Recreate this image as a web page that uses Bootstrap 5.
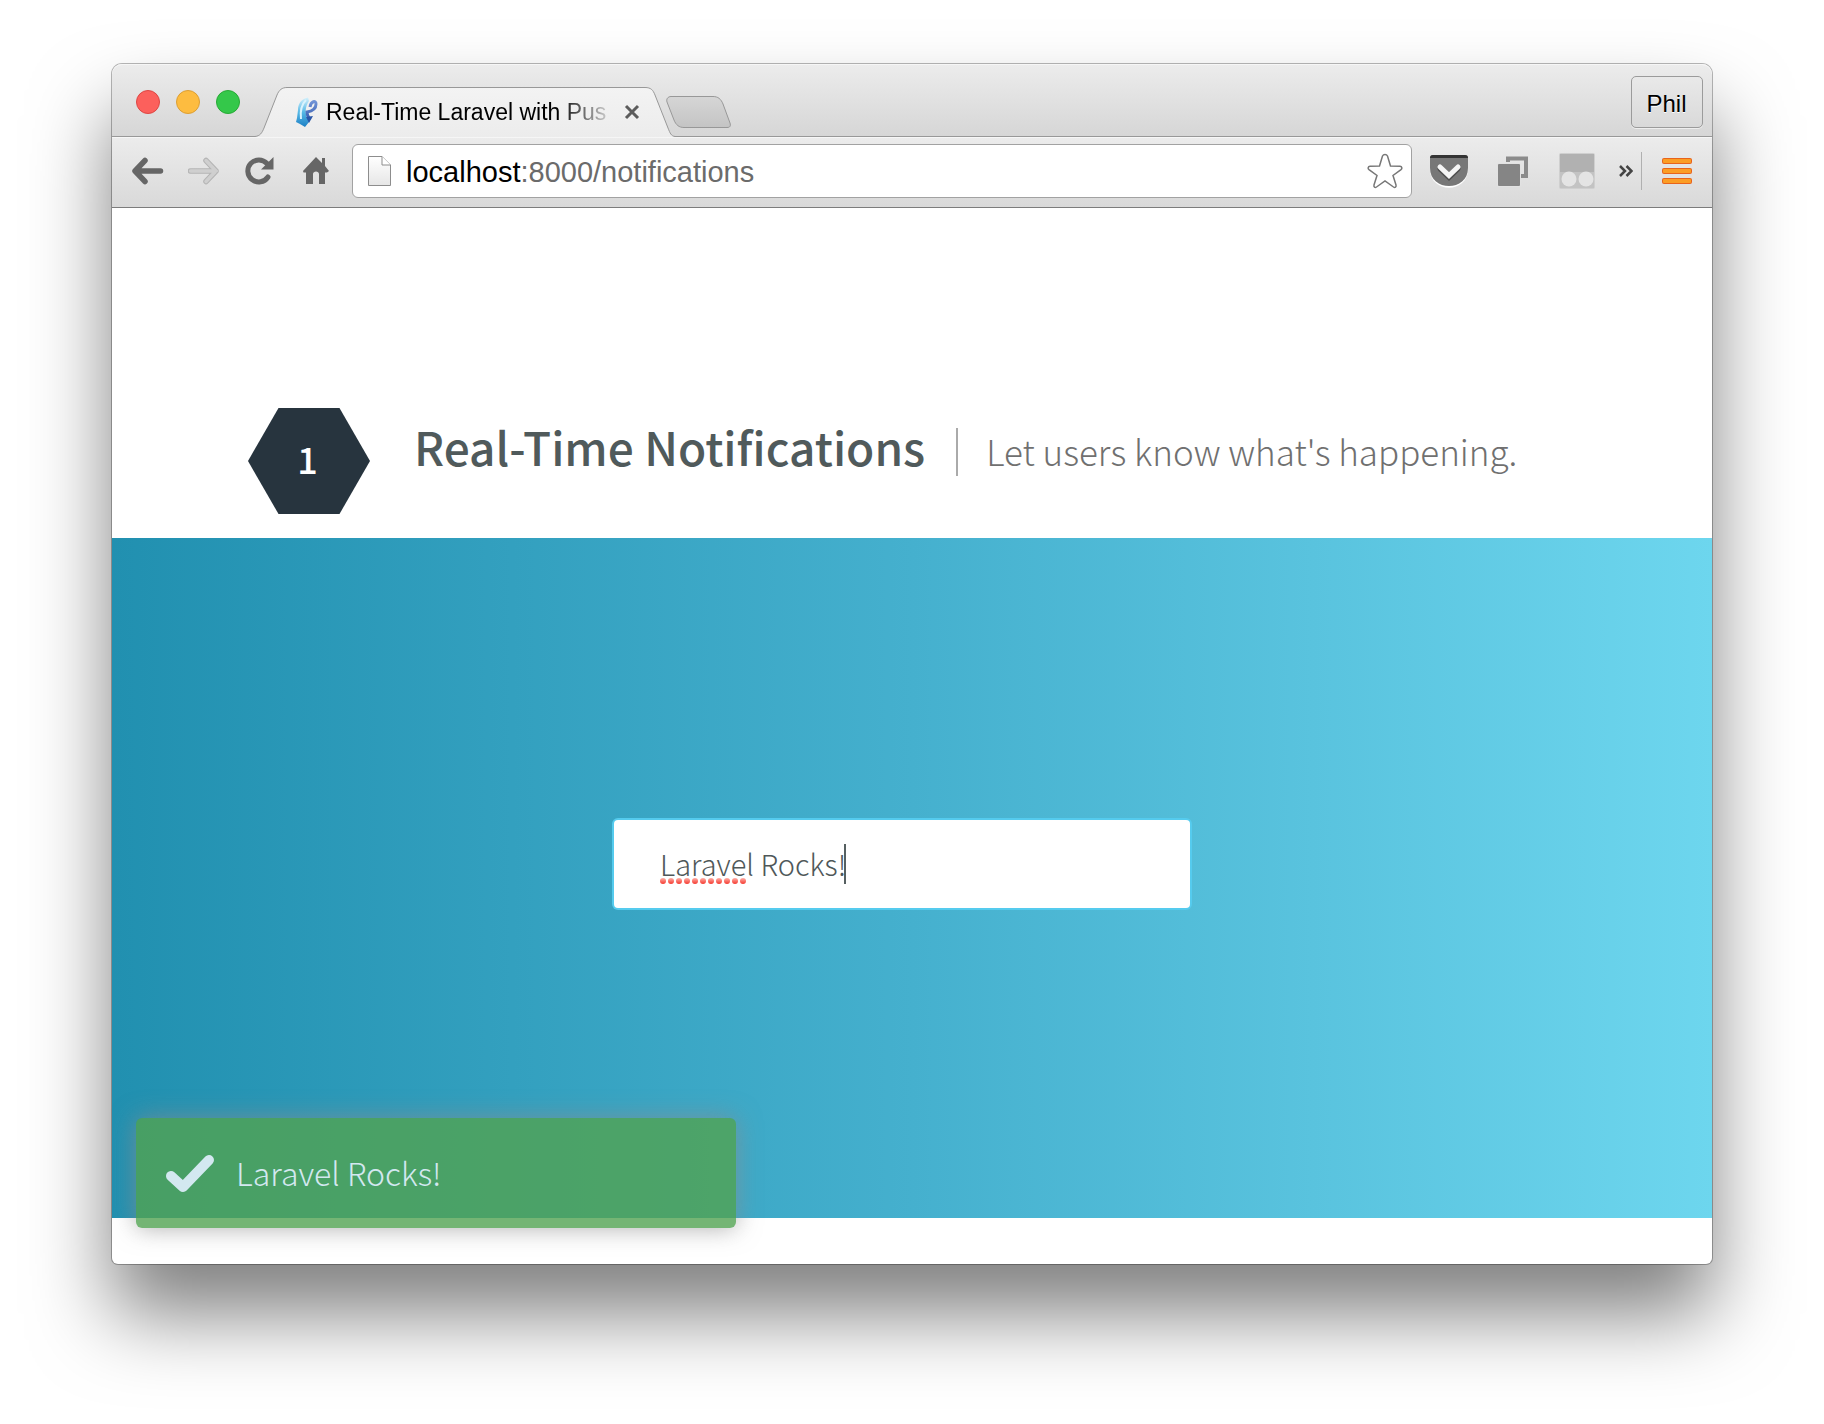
<!DOCTYPE html>
<html lang="en">
<head>
<meta charset="utf-8">
<meta name="viewport" content="width=device-width, initial-scale=1">
<title>Real-Time Laravel with Pusher</title>
<link href="https://cdn.jsdelivr.net/npm/bootstrap@5.3.0/dist/css/bootstrap.min.css" rel="stylesheet">
<style>
  body { background: #fff; }
  .desktop { min-height: 100vh; padding: 64px 112px 160px; }
  .browser {
    border-radius: 10px 10px 6px 6px;
    background: #fff;
    box-shadow: 0 0 0 1px rgba(0,0,0,.28), 0 50px 80px rgba(0,0,0,.5);
    font-family: "Liberation Sans", Arial, sans-serif;
  }
  .bare { border: 0; padding: 0; background: none; line-height: 0; flex: none; }
  .tabstrip {
    height: 73px;
    padding: 12px 9px 0 24px;
    border-radius: 10px 10px 0 0;
    border-bottom: 1px solid #989898;
    background: linear-gradient(#ececec, #d6d6d6);
    box-shadow: inset 0 1px 0 #f6f6f6;
  }
  .light { width: 24px; height: 24px; border-radius: 50%; margin-top: 14px; }
  .light-close { background: #fc605c; border: 1px solid #de4643; }
  .light-min { background: #fdbc40; border: 1px solid #dd9f33; }
  .light-max { background: #34c84a; border: 1px solid #27aa35; }
  .tab-item { width: 420px; height: 50px; margin: 11px 0 0 15px; padding: 0 0 0 41px; }
  .tab-shape { left: 0; top: 0; }
  .tab-title {
    width: 290px; font-size: 23px; line-height: 48px; color: #000;
    -webkit-mask-image: linear-gradient(90deg, #000 80%, transparent);
    mask-image: linear-gradient(90deg, #000 80%, transparent);
  }
  .new-tab { margin: 20px 0 0 -9px; }
  .user-btn {
    width: 72px; height: 52px; border: 1px solid #9b9b9b; border-radius: 5px;
    background: linear-gradient(#e9e9e9, #d9d9d9); color: #000; font-size: 24px; padding: 3px 1px 0 0;
    text-shadow: 0 1px 0 #fff; box-shadow: 0 1px 0 #eee;
  }
  .toolbar {
    height: 71px; padding: 0 20px 2px; border-bottom: 1px solid #7c7c7c;
    background: linear-gradient(#ececec, #d9d9d9);
    box-shadow: inset 0 1px 0 #f6f6f6;
  }
  .nav-buttons { gap: 24px; margin-right: 20px; }
  .extensions { gap: 27px; margin: 0 23px 0 16px; }
  .omnibox {
    height: 54px; padding: 0 8px 0 15px; border: 1px solid #a2a2a2; border-radius: 6px; background: #fff;
  }
  .address { font-size: 29px; line-height: 50px; color: #6b6b6b; text-decoration: none; margin-left: 15px; padding-top: 2px; }
  .address b { font-weight: 400; color: #000; }
  .separator { width: 1px; height: 38px; background: #b0b0b0; margin: 0 20px 0 8px; }
  .page-view, .toast-box { font-family: "Noto Sans CJK SC", sans-serif; }
  .page-view { min-height: 1056px; }
  .step-head { padding: 200px 136px 24px; }
  .hexagon {
    width: 122px; height: 106px; margin-right: 44px; flex: none; padding-right: 3px;
    background: #27343e; color: #fff; font-size: 36px; font-weight: 500; line-height: 100px;
    clip-path: polygon(25% 0, 75% 0, 100% 50%, 75% 100%, 25% 100%, 0 50%);
  }
  .headline { margin-top: 13px; }
  .headline h1 { font-size: 46px; line-height: 50px; font-weight: 500; color: #505a5b; }
  .divider { width: 2px; height: 48px; background: #aaa; margin: 7px 28px 0 31px; }
  .tagline { font-size: 35px; line-height: 40px; font-weight: 200; color: #707070; }
  .stage {
    height: 680px; padding: 282px 20px 0 0;
    background: linear-gradient(90deg, #2190b0, #45b0ce 50%, #6dd6ee);
  }
  .notify-form { width: 576px; }
  .notify-input {
    height: 88px; padding: 0 46px 2px; border: 0; border-radius: 4px;
    font-family: inherit; font-size: 29px; font-weight: 200; color: #4f5859;
  }
  .notify-input, .notify-input:focus { box-shadow: 0 0 0 2px #55cbee; color: #4f5859; }
  .spelling { left: 46px; top: 58px; }
  .caret { left: 230px; top: 24px; width: 2px; height: 40px; background: #566061; }
  .toast-box {
    left: 24px; bottom: 36px; width: 600px; height: 110px; padding-left: 30px;
    border-radius: 6px; background: rgba(81,163,81,.8); color: #d3e8f0;
    box-shadow: 0 0 24px rgba(140,140,140,.7);
  }
  .toast-note { font-size: 32px; line-height: 48px; font-weight: 200; margin: 0 0 2px 22px; }
</style>
</head>
<body>
<main class="desktop d-flex flex-column">
  <div class="browser flex-grow-1 d-flex flex-column position-relative">

    <header class="tabstrip d-flex align-items-start">
      <div class="d-flex gap-3">
        <button class="bare light light-close" aria-label="Close window"></button>
        <button class="bare light light-min" aria-label="Minimize window"></button>
        <button class="bare light light-max" aria-label="Zoom window"></button>
      </div>
      <div class="tab-item position-relative d-flex align-items-center flex-shrink-0">
        <svg class="tab-shape position-absolute" width="420" height="50" viewBox="0 0 420 50" aria-hidden="true">
          <defs><linearGradient id="tabFill" x2="0" y2="1"><stop stop-color="#f3f3f3"/><stop offset="1" stop-color="#ececec"/></linearGradient></defs>
          <path d="M0 50V49.500C5 49 7 46 9 41L22 8C24 3 27 .5 32 .5H390C396 .5 398 3 400 8L413 41C415 46 416 49 420 49.500V50Z" fill="url(#tabFill)"/>
          <path d="M0 49.500C5 49 7 46 9 41L22 8C24 3 27 .5 32 .5H390C396 .5 398 3 400 8L413 41C415 46 416 49 420 49.500" fill="none" stroke="#989898"/>
        </svg>
        <svg class="position-relative flex-shrink-0" width="22" height="30" viewBox="0 0 22 30" aria-hidden="true">
          <defs>
            <linearGradient id="favA" x2="0" y2="1"><stop stop-color="#d4f1fc"/><stop offset=".5" stop-color="#55b8e6"/><stop offset="1" stop-color="#1d7fc4"/></linearGradient>
            <linearGradient id="favB" x2="0" y2="1"><stop stop-color="#6f92d6"/><stop offset="1" stop-color="#3a5fb0"/></linearGradient>
          </defs>
          <path d="M12 .5C5 2 2 7 2 13L1 21L0 25L4 27L9 30L13 25L16 20L11 21C9 16 9 10 13 4Z" fill="url(#favA)"/>
          <path d="M5 22C4 14 5 8 10 3" stroke="#d9f3fd" stroke-width="2" fill="none"/>
          <path d="M14 10C15 4 20 3 20 7C20 11 17 14 11 15C11 18 12 20 14 22" stroke="url(#favB)" stroke-width="3" fill="none"/>
          <path d="M10 20L17 19L13 26Z" fill="#2a56a8"/>
        </svg>
        <span class="tab-title position-relative text-nowrap overflow-hidden ms-2">Real-Time Laravel with Pus</span>
        <button class="bare position-relative ms-2" aria-label="Close tab">
          <svg width="16" height="16" viewBox="0 0 16 16"><path d="M2 2L14 14M14 2L2 14" stroke="#5c5c5c" stroke-width="3"/></svg>
        </button>
      </div>
      <button class="bare new-tab position-relative" aria-label="New tab">
        <svg width="66" height="34" viewBox="0 0 66 34">
          <defs><linearGradient id="ntFill" x2="0" y2="1"><stop stop-color="#d6d6d6"/><stop offset="1" stop-color="#c4c4c4"/></linearGradient></defs>
          <path d="M5 .5H47C52 .5 55 3 57 8L64 27C65 30 64 31.500 61 31.500H18C13 31.500 10 29 8 24L1 6C0 3 2 .5 5 .5Z" fill="url(#ntFill)" stroke="#989898"/>
        </svg>
      </button>
      <button class="user-btn ms-auto">Phil</button>
    </header>

    <nav class="toolbar d-flex align-items-center" aria-label="Browser">
      <div class="nav-buttons d-flex align-items-center">
        <button class="bare" aria-label="Back"><svg width="32" height="28" viewBox="0 0 32 28"><path d="M28.500 14H4M13 3.500L3 14L13 24.500" fill="none" stroke="#666" stroke-width="5.500" stroke-linecap="round" stroke-linejoin="round"/></svg></button>
        <button class="bare" aria-label="Forward"><svg width="32" height="28" viewBox="0 0 32 28"><path d="M2.500 14H28M18 3.500L28 14L18 24.500" fill="none" stroke="#b4b4b4" stroke-width="5.500" stroke-linecap="round" stroke-linejoin="round"/><path d="M2.500 14H28M18 3.500L28 14L18 24.500" fill="none" stroke="#cfcfcf" stroke-width="3.500" stroke-linecap="round"/></svg></button>
        <button class="bare" aria-label="Reload"><svg width="32" height="28" viewBox="0 0 32 28"><path d="M24 20A11 11 0 1 1 23 6.500" fill="none" stroke="#666" stroke-width="5" stroke-linecap="round"/><path d="M29.500 0V12.500H17Z" fill="#666"/></svg></button>
        <button class="bare" aria-label="Home"><svg width="32" height="28" viewBox="0 0 32 28"><path d="M16 0L22 6V1H25V9L29 14L27 15.500H25V27H19V17C19 13.500 13 13.500 13 17V27H6V15.500H3.500L3 14Z" fill="#666"/></svg></button>
      </div>
      <div class="omnibox flex-grow-1 d-flex align-items-center">
        <svg class="flex-shrink-0" width="23" height="30" viewBox="0 0 23 30" aria-hidden="true">
          <defs><linearGradient id="pageFill" x2="0" y2="1"><stop stop-color="#fff"/><stop offset="1" stop-color="#e6e6e6"/></linearGradient></defs>
          <path d="M.5 .5H14L22.500 9V29.500H.5Z" fill="url(#pageFill)" stroke="#8d8d8d"/><path d="M14 .5V9H22.500" fill="#fff" stroke="#8d8d8d"/>
        </svg>
        <a class="address flex-grow-1" href="#"><b>localhost</b>:8000/notifications</a>
        <button class="bare" aria-label="Bookmark this page"><svg width="36" height="36" viewBox="0 0 36 36"><path d="M18 1.500C19 1.500 20 2 20.500 3L23.500 13L33 13.300C35 13.500 35.500 15.500 34 16.700L26 22.500L29 32C29.500 34 28 35 26.500 34L18 28L9.500 34C8 35 6.500 34 7 32L10 22.500L2 16.700C.5 15.500 1 13.500 3 13.300L12.500 13L15.500 3C16 2 17 1.500 18 1.500Z" fill="#fff" stroke="#777" stroke-width="1.500"/></svg></button>
      </div>
      <div class="extensions d-flex align-items-center">
        <button class="bare" aria-label="Pocket"><svg width="42" height="36" viewBox="0 0 42 36"><path d="M2 5C2 3 3 2 5 2H37C39 2 40 3 40 5V16C40 41 2 41 2 16Z" fill="#fff"/><path d="M2 5C2 3 3 2 5 2H37C39 2 40 3 40 5V15C40 39 2 39 2 15Z" fill="#777"/><path d="M2 5C2 3 3 2 5 2H37C39 2 40 3 40 5H2Z" fill="#333"/><path d="M12 16L21 24.500L30 16" fill="none" stroke="#4d4d4d" stroke-width="5" stroke-linecap="round"/><path d="M12 14L21 22.500L30 14" fill="none" stroke="#f4f4f4" stroke-width="5" stroke-linecap="round"/></svg></button>
        <button class="bare" aria-label="Windows"><svg width="34" height="32" viewBox="0 0 34 32"><path d="M11 7V3.500H29V21H24" fill="none" stroke="#8b8b8b" stroke-width="4"/><rect y="8" width="24" height="24" rx="2" fill="#e2e2e2"/><rect x="1" y="9" width="22" height="22" rx="1" fill="#858585"/></svg></button>
        <button class="bare" aria-label="Extension"><svg width="38" height="38" viewBox="0 0 38 38"><rect x="1" y="1" width="36" height="36" rx="2" fill="#cfcfcf"/><rect x="2" y="2" width="34" height="20" fill="#b1b1b1"/><rect x="2" y="20" width="34" height="16" fill="#c3c3c3"/><circle cx="11" cy="27" r="7.500" fill="#e4e4e4"/><circle cx="28" cy="27" r="7.500" fill="#e4e4e4"/></svg></button>
      </div>
      <button class="bare" aria-label="More extensions"><svg width="14" height="12" viewBox="0 0 14 12"><path d="M1 1L6 6L1 11M7.500 1L12.500 6L7.500 11" fill="none" stroke="#444" stroke-width="2.500"/></svg></button>
      <span class="separator"></span>
      <button class="bare" aria-label="Menu"><svg width="30" height="28" viewBox="0 0 30 28"><g fill="#e8641c"><rect y="1" width="30" height="6" rx="2"/><rect y="11" width="30" height="6" rx="2"/><rect y="21" width="30" height="6" rx="2"/></g><g fill="#fb9d24"><rect x="1" y="2" width="28" height="4" rx="1"/><rect x="1" y="12" width="28" height="4" rx="1"/><rect x="1" y="22" width="28" height="4" rx="1"/></g></svg></button>
    </nav>

    <div class="page-view flex-grow-1">
      <section class="step-head d-flex align-items-start">
        <div class="hexagon text-center">1</div>
        <div class="headline d-flex align-items-baseline text-nowrap">
          <h1 class="m-0">Real-Time Notifications</h1>
          <span class="divider align-self-start"></span>
          <p class="tagline m-0">Let users know what's happening.</p>
        </div>
      </section>
      <section class="stage d-flex justify-content-center align-items-start">
        <form class="notify-form position-relative">
          <input class="form-control notify-input" type="text" value="Laravel Rocks!" aria-label="Notification text">
          <svg class="spelling position-absolute" width="88" height="6" viewBox="0 0 88 6" aria-hidden="true">
            <defs>
              <linearGradient id="dotFill" x2="0" y2="1"><stop stop-color="#ffb0a8"/><stop offset="1" stop-color="#f5382e"/></linearGradient>
              <pattern id="dots" width="8" height="6" patternUnits="userSpaceOnUse"><circle cx="3" cy="3" r="3" fill="url(#dotFill)"/></pattern>
            </defs>
            <rect width="88" height="6" fill="url(#dots)"/>
          </svg>
          <span class="caret position-absolute"></span>
        </form>
      </section>
    </div>

    <div class="toast-box position-absolute d-flex align-items-center" role="status">
      <svg width="48" height="38" viewBox="0 0 48 38" aria-hidden="true"><path d="M5 22L17 33L43 6" fill="none" stroke="#d3e8f0" stroke-width="10" stroke-linecap="round" stroke-linejoin="round"/></svg>
      <p class="toast-note">Laravel Rocks!</p>
    </div>
  </div>
</main>
<script src="https://cdn.jsdelivr.net/npm/bootstrap@5.3.0/dist/js/bootstrap.bundle.min.js"></script>
</body>
</html>
